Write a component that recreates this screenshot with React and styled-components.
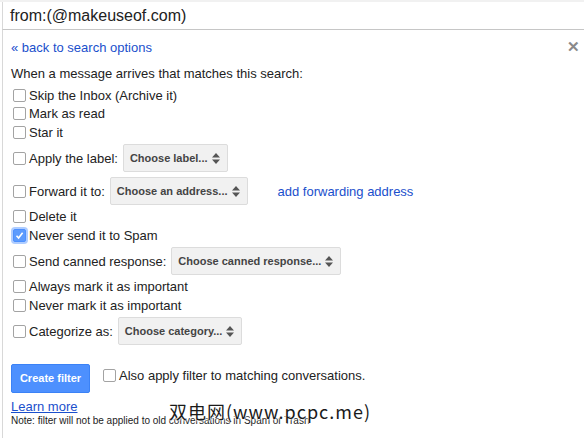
import React from "react";
import styled, { createGlobalStyle } from "styled-components";

const Global = createGlobalStyle`
  html, body { margin: 0; padding: 0; background: #fff; }
  body { font-family: "Liberation Sans", Arial, sans-serif; color: #222; }
`;

const Page = styled.div`
  position: relative;
  width: 584px;
  height: 438px;
  overflow: hidden;
  border-top: 2px solid #f1f1f1;
  box-sizing: border-box;
`;

const SearchBar = styled.div`
  height: 28px;
  margin-left: 2px;
  border-left: 1px solid #d8d8d8;
  border-bottom: 1px solid #c6c6c6;
  display: flex;
  align-items: center;
  padding-left: 7px;
  padding-top: 1px;
  box-sizing: border-box;
  font-size: 16px;
  color: #222;
`;

const Panel = styled.div`
  position: relative;
  margin-left: 2px;
  border-left: 1px solid #d8d8d8;
  padding: 10px 0 0 8px;
  height: 420px;
  font-size: 13px;
`;

const Close = styled.div`
  position: absolute;
  top: 8px;
  right: 4px;
  color: #8a8a8a;
  font-size: 15px;
  font-weight: bold;
`;

const Link = styled.a`
  color: #1a4fcc;
  text-decoration: ${(p) => (p.$underline ? "underline" : "none")};
  cursor: pointer;
`;

const Back = styled.div`
  line-height: 15px;
  margin-bottom: 11px;
`;

const Heading = styled.div`
  line-height: 15px;
  margin-bottom: 5px;
`;

const Options = styled.div`
  display: flex;
  flex-direction: column;
`;

const Row = styled.label`
  display: flex;
  align-items: center;
  height: ${(p) => (p.$tall ? "28px" : "18.5px")};
  margin: ${(p) => (p.$tall ? "2.5px 0" : "0")};
  gap: 3px;
`;

const Box = styled.span`
  width: 13px;
  height: 13px;
  margin-left: 2px;
  box-sizing: border-box;
  border-radius: 2px;
  border: 1px solid ${(p) => (p.$checked ? "#4d90fe" : "#a3a3a3")};
  background: ${(p) => (p.$checked ? "#5c9bfd" : "#fff")};
  box-shadow: ${(p) => (p.$checked ? "0 0 0 2px rgba(77,144,254,0.45)" : "none")};
  display: inline-flex;
  align-items: center;
  justify-content: center;
  flex-shrink: 0;
`;

const Select = styled.span`
  display: inline-flex;
  align-items: center;
  height: 28px;
  box-sizing: border-box;
  margin-left: 2px;
  padding: 0 7px 0 6px;
  gap: 4px;
  background: #f1f1f1;
  border: 1px solid #dcdcdc;
  border-radius: 2px;
  font-size: 11px;
  font-weight: bold;
  color: #444;
`;

const SideLink = styled(Link)`
  margin-left: 27px;
`;

const Footer = styled.div`
  display: flex;
  align-items: flex-start;
  margin-top: 16px;
  gap: 11px;
`;

const Button = styled.button`
  width: 79px;
  height: 29px;
  background: #4d90fe;
  border: 1px solid #3b82f6;
  border-radius: 2px;
  color: #fff;
  font-family: inherit;
  font-size: 11px;
  font-weight: bold;
  padding: 0;
`;

const Inline = styled.label`
  display: flex;
  align-items: center;
  gap: 3px;
  margin-top: 4px;
`;

const Learn = styled.div`
  margin-top: 6px;
  line-height: 15px;
`;

const Note = styled.div`
  font-size: 10px;
  line-height: 14px;
  color: #222;
`;

const Watermark = styled.div`
  position: absolute;
  left: 169px;
  top: 396px;
  font-family: "Noto Sans CJK SC", sans-serif;
  font-size: 18px;
  color: #1a1a1a;
  letter-spacing: 1px;
  text-shadow: 0 0 2px #fff, 0 0 2px #fff, 0 0 3px #fff;
`;

const Arrows = () => (
  <svg width="8" height="11" viewBox="0 0 8 11">
    <path d="M4 0 L8 4.5 H0 Z M4 11 L8 6.5 H0 Z" fill="#555" />
  </svg>
);

const Check = ({ checked }) => (
  <Box $checked={checked}>
    {checked && (
      <svg width="9" height="9" viewBox="0 0 9 9">
        <path d="M1.5 4.8 L3.6 7 L7.6 1.8" stroke="#fff" strokeWidth="1.6" fill="none" />
      </svg>
    )}
  </Box>
);

const options = [
  { text: "Skip the Inbox (Archive it)" },
  { text: "Mark as read" },
  { text: "Star it" },
  { text: "Apply the label:", select: "Choose label..." },
  { text: "Forward it to:", select: "Choose an address...", link: "add forwarding address" },
  { text: "Delete it" },
  { text: "Never send it to Spam", checked: true },
  { text: "Send canned response:", select: "Choose canned response..." },
  { text: "Always mark it as important" },
  { text: "Never mark it as important" },
  { text: "Categorize as:", select: "Choose category..." },
];

export default function App() {
  return (
    <Page>
      <Global />
      <SearchBar>from:(@makeuseof.com)</SearchBar>
      <Panel>
        <Close>✕</Close>
        <Back>
          <Link>« back to search options</Link>
        </Back>
        <Heading>When a message arrives that matches this search:</Heading>
        <Options>
          {options.map((o) => (
            <Row key={o.text} $tall={!!o.select}>
              <Check checked={o.checked} />
              <span>{o.text}</span>
              {o.select && (
                <Select>
                  {o.select}
                  <Arrows />
                </Select>
              )}
              {o.link && <SideLink>{o.link}</SideLink>}
            </Row>
          ))}
        </Options>
        <Footer>
          <Button>Create filter</Button>
          <Inline>
            <Check />
            <span>Also apply filter to matching conversations.</span>
          </Inline>
        </Footer>
        <Learn>
          <Link $underline>Learn more</Link>
        </Learn>
        <Note>Note: filter will not be applied to old conversations in Spam or Trash</Note>
      </Panel>
      <Watermark>双电网(www.pcpc.me)</Watermark>
    </Page>
  );
}
